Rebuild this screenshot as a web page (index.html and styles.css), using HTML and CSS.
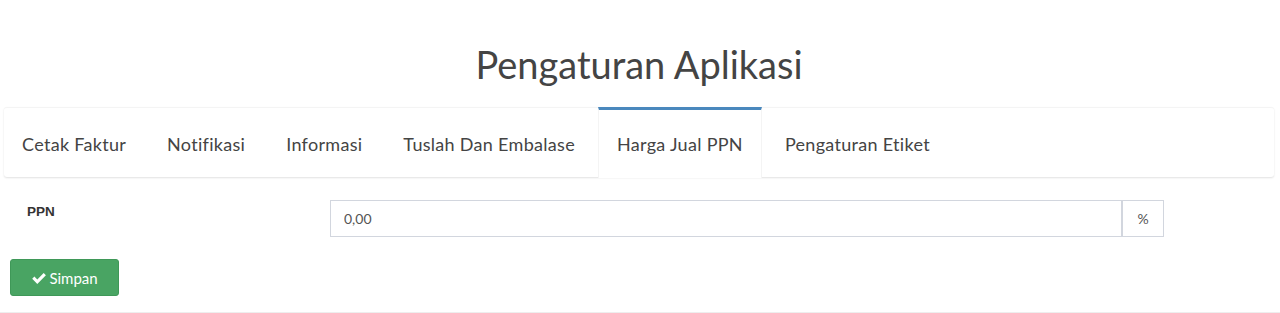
FILE: index.html
```html
<!DOCTYPE html>
<html lang="id">
<head>
    <meta charset="UTF-8">
    <title>Pengaturan Aplikasi</title>
    <link rel="stylesheet" href="styles.css">
</head>
<body>
    <h1 class="page-title">Pengaturan Aplikasi</h1>

    <div class="tabs-box">
        <ul class="nav-tabs">
            <li class="tab">Cetak Faktur</li>
            <li class="tab">Notifikasi</li>
            <li class="tab">Informasi</li>
            <li class="tab">Tuslah Dan Embalase</li>
            <li class="tab active">Harga Jual PPN</li>
            <li class="tab">Pengaturan Etiket</li>
        </ul>
    </div>

    <form class="settings-form">
        <div class="form-row">
            <label class="form-label">PPN</label>
            <div class="input-group">
                <input class="form-input" type="text" value="0,00">
                <span class="input-addon">%</span>
            </div>
        </div>
        <button type="button" class="btn-save">
            <svg class="check" viewBox="0 0 16 16" width="16" height="16">
                <path d="M1.2 8.8 L3.4 6.6 L6.3 9.5 L12.7 3.1 L14.9 5.3 L6.3 13.9 Z" fill="#fff"/>
            </svg>Simpan
        </button>
    </form>
    <div class="footer-line"></div>
</body>
</html>
```

FILE: styles.css
```css
body {
    margin: 0;
    padding: 0 6px 0 4px;
    font-family: 'Lato', 'Noto Sans', sans-serif;
    color: #333;
    background: #fff;
}

.page-title {
    margin: 0;
    padding: 44px 0 23px;
    text-align: center;
    font-size: 38px;
    font-weight: 400;
    color: #444;
    line-height: 40px;
}

.tabs-box {
    background: #fff;
    border-radius: 3px;
    box-shadow: 0 1px 2px rgba(0, 0, 0, 0.12);
    border-top: 1px solid #f4f4f4;
}

.nav-tabs {
    display: flex;
    list-style: none;
    margin: 0;
    padding: 0;
}

.tab {
    padding: 0 18px;
    margin-right: 5px;
    height: 71px;
    display: flex;
    align-items: center;
    font-size: 18px;
    letter-spacing: 0.3px;
    color: #444;
    border-top: 3px solid transparent;
    box-sizing: border-box;
    margin-top: -1px;
    margin-bottom: -1px;
}

.tab.active {
    background: #fff;
    position: relative;
    z-index: 1;
    border-top-color: #4a88bd;
    border-left: 1px solid #f4f4f4;
    border-right: 1px solid #f4f4f4;
}

.settings-form {
    padding: 23px 6px 0 6px;
}

.form-row {
    display: grid;
    grid-template-columns: 320px 834px;
    align-items: start;
}

.form-label {
    font-family: 'Liberation Sans', Arial, sans-serif;
    font-weight: bold;
    font-size: 13.5px;
    padding: 4px 0 0 17px;
    color: #333;
}

.input-group {
    display: flex;
    height: 37px;
}

.form-input {
    flex: 1;
    border: 1px solid #d2d6de;
    padding: 0 13px;
    font-family: 'Lato', sans-serif;
    font-size: 14px;
    color: #555;
    outline: none;
    margin: 0;
}

.input-addon {
    width: 40px;
    border: 1px solid #d2d6de;
    display: flex;
    align-items: center;
    justify-content: center;
    font-size: 14px;
    color: #555;
}

.btn-save {
    margin-top: 22px;
    width: 109px;
    height: 37px;
    background: #49a463;
    border: 1px solid #3f9858;
    border-radius: 3px;
    color: #fff;
    font-family: 'Lato', sans-serif;
    font-size: 15px;
    display: flex;
    align-items: center;
    justify-content: center;
    gap: 2px;
    padding: 0;
}

.footer-line {
    margin: 16px -6px 0 -4px;
    border-top: 1px solid #eee;
}
```
